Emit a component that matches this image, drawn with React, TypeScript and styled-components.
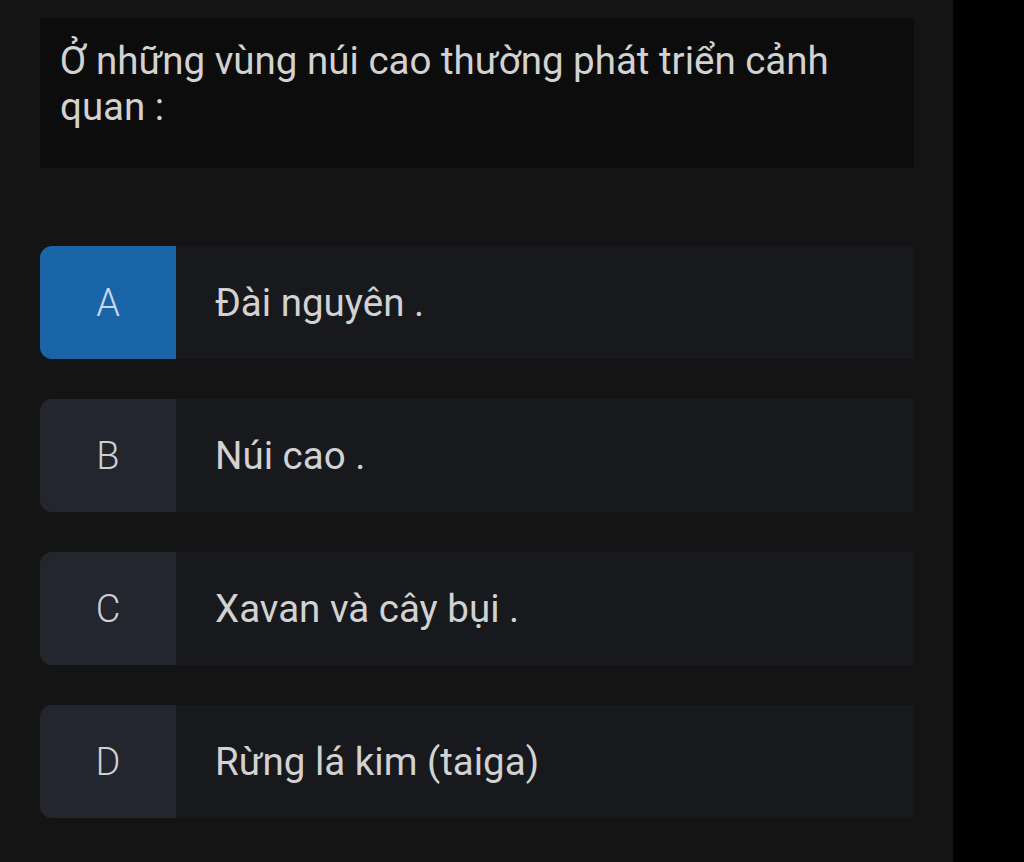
import styled, { createGlobalStyle } from 'styled-components'

const GlobalStyle = createGlobalStyle`
    html, body {
        margin: 0;
        padding: 0;
        background: #000000;
    }
    #root {
        min-height: 862px;
    }
`

const Screen = styled.div`
    display: flex;
    width: 1024px;
    height: 862px;
    background: #000000;
    font-family: 'Roboto', 'Noto Sans', sans-serif;
`

const Panel = styled.div`
    width: 953px;
    height: 100%;
    box-sizing: border-box;
    background: #141414;
    padding: 18px 39px 0 40px;
    display: flex;
    flex-direction: column;
`

const QuestionBox = styled.div`
    background: #0c0c0c;
    height: 150px;
    box-sizing: border-box;
    padding: 20px 20px 0 20px;
    font-size: 38.5px;
    line-height: 46px;
    color: #d2d2d2;
`

const Options = styled.div`
    display: flex;
    flex-direction: column;
    gap: 40px;
    margin-top: 78px;
`

const Option = styled.div`
    display: flex;
    height: 113px;
    border-radius: 12px 0 0 12px;
    overflow: hidden;
    background: #18191d;
    cursor: pointer;
`

const Letter = styled.div<{ $active?: boolean }>`
    width: 136px;
    display: flex;
    align-items: center;
    justify-content: center;
    background: ${p => (p.$active ? '#1a64a8' : '#23252f')};
    color: ${p => (p.$active ? '#c9d8ea' : '#cfcfcf')};
    font-size: 38px;
    font-weight: 300;
`

const Answer = styled.div`
    display: flex;
    align-items: center;
    padding-left: 39px;
    font-size: 38.5px;
    color: #d2d2d2;
`

const answers = [
    { key: 'A', text: 'Đài nguyên .' },
    { key: 'B', text: 'Núi cao .' },
    { key: 'C', text: 'Xavan và cây bụi .' },
    { key: 'D', text: 'Rừng lá kim (taiga)' },
]

const App = () => {
    const selected = 'A'
    return (
        <>
            <GlobalStyle />
            <Screen>
                <Panel>
                    <QuestionBox>
                        Ở những vùng núi cao thường phát triển cảnh quan :
                    </QuestionBox>
                    <Options>
                        {answers.map(a => (
                            <Option key={a.key}>
                                <Letter $active={a.key === selected}>{a.key}</Letter>
                                <Answer>{a.text}</Answer>
                            </Option>
                        ))}
                    </Options>
                </Panel>
            </Screen>
        </>
    )
}

export default App
